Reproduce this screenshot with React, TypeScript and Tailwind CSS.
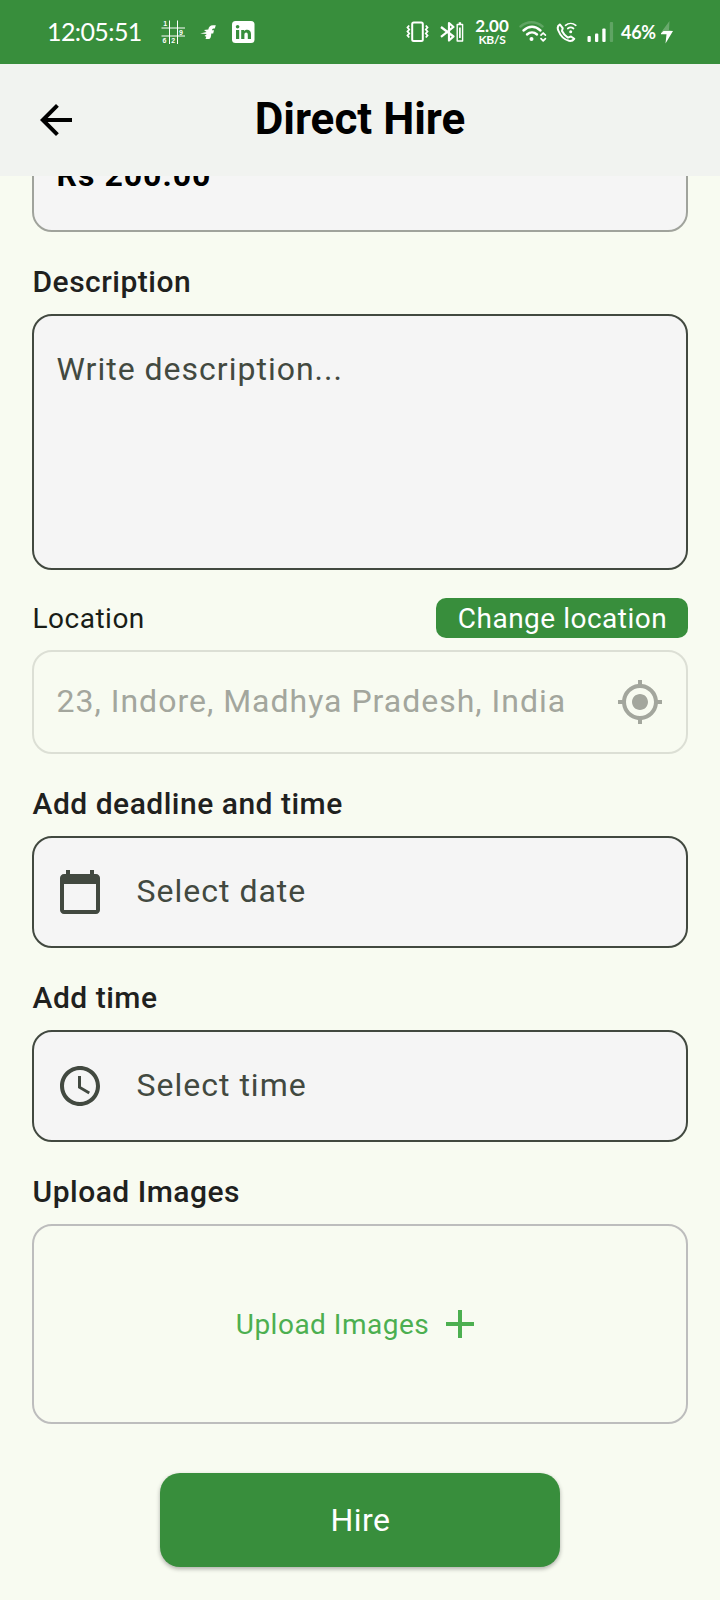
import type { ReactNode } from "react";
import { MdAccessTime, MdAdd, MdArrowBack, MdCalendarToday, MdMyLocation } from "react-icons/md";

function StatusBar() {
  return (
    <div className="flex h-16 shrink-0 items-center bg-[#388e3c] pl-[47px] text-white">
      <span className="w-[114px] whitespace-nowrap pb-[3px] font-['Lato',sans-serif] text-[25px] leading-8 tracking-[-0.6px]">12:05:51</span>
      <svg className="h-6 w-6 shrink-0" viewBox="0 0 24 24" fill="none" stroke="white" strokeWidth="1">
        <path d="M8.5 .5V24M16.5 .5V24M.5 8H24M.5 16H24" />
        <g fill="white" stroke="none" fontFamily="Liberation Sans" fontWeight="700" fontSize="7">
          <text x="2.2" y="6">1</text>
          <text x="18" y="14.5">9</text>
          <text x="1.5" y="23">6</text>
          <text x="10.2" y="23">2</text>
        </g>
      </svg>
      <svg className="ml-[15px] h-4 w-4 shrink-0" viewBox="0 0 16 16" fill="white">
        <path d="M15.8 1.3H13C10 1.3 8.800 3 8.300 5.500L4 6L6.500 8L.2 9.500L6.800 10L4.500 12L6.300 12.800L5.500 15H8.500C10.500 15 11 13 11.300 9.400H13.200L14 6.200H12C12.200 4.800 13 4.500 14.800 4.500Z" />
      </svg>
      <svg className="ml-4 h-[22px] w-[23px] shrink-0" viewBox="0 0 23 22">
        <rect width="22.5" height="22" rx="3.5" fill="white" />
        <g fill="#388e3c">
          <circle cx="5.600" cy="5.700" r="1.800" />
          <path d="M4 9h3.200v9H4zM9.200 9h3v1.300c1.800-2.500 6.800-1.800 6.800 2.600V18h-3.200v-4.300c0-3-3.400-2.800-3.400 0V18H9.200z" />
        </g>
      </svg>

      <svg className="ml-[151px] h-[22px] w-[23px] shrink-0" viewBox="0 0 23 22" fill="none" stroke="white">
        <rect x="6.200" y="1.500" width="10.600" height="18.500" rx="1.500" strokeWidth="2" />
        <path d="M3.200 4.500L1.500 6.500L3.200 8.500L1.500 10.500L3.200 12.500L1.500 14.500L3.200 16.500M19.800 4.500L21.500 6.500L19.800 8.500L21.500 10.500L19.800 12.500L21.500 14.500L19.800 16.500" strokeWidth="1.800" />
      </svg>
      <svg className="ml-[11px] h-[22px] w-[24px] shrink-0" viewBox="0 0 24 22" fill="none" stroke="white" strokeLinejoin="round">
        <path d="M1 6L13.500 15.500L9 19.500V2L13.500 6L1 15.800" strokeWidth="2.200" />
        <path d="M17.200 3.500h5.400v16.500h-5.400zM18.700 2h2.400" strokeWidth="1.400" />
        <path d="M19.900 6.500v10.500" strokeWidth="1.700" />
      </svg>
      <div className="ml-[12px] flex w-[32px] flex-col items-center font-['Lato',sans-serif] font-bold">
        <span className="text-[17px] leading-[13px]">2.00</span>
        <span className="mt-[2px] text-[12px] leading-[11px] tracking-[-0.3px]">KB/S</span>
      </div>
      <svg className="ml-[11px] h-[22px] w-7 shrink-0" viewBox="0 0 28 22" fill="none" stroke="white" strokeWidth="2.400" strokeLinecap="round">
        <path d="M1.500 5.500C8 -.2 17 -.2 23.500 5.500" opacity=".2" />
        <path d="M4.500 9.500C10 4.800 16 4.800 21.500 9.500M8 13.500C11 10.800 15 10.800 18 13.500" />
        <circle cx="12.500" cy="18" r="2" fill="white" stroke="none" />
        <path d="M22 14.200L24.200 12L26.400 14.200M22 17.600L24.200 19.800L26.400 17.600" strokeWidth="1.700" strokeLinejoin="round" />
      </svg>
      <svg className="ml-[9px] h-[22px] w-[22px] shrink-0" viewBox="0 0 22 22" fill="none" stroke="white" strokeLinejoin="round" strokeLinecap="round">
        <path d="M4 3.500C1.800 4.500 1.300 7 2.300 9.500C4.300 14.500 8.500 18.700 13 19.800C15.500 20.300 17 19.500 18.200 17.800L15 15.500L11.800 16.600C9.300 15 7.300 12.700 6 10L6.700 7.200Z" strokeWidth="2" />
        <path d="M9.500 4.300C12.500 1.900 16.800 1.900 19.800 4.300M11.800 7.500C13.500 6.200 15.800 6.200 17.500 7.500" strokeWidth="1.700" />
        <circle cx="14.700" cy="10.800" r="1.500" fill="white" stroke="none" />
      </svg>
      <svg className="ml-[9px] h-[22px] w-[27px] shrink-0" viewBox="0 0 27 22" fill="white">
        <rect x=".5" y="15" width="3.300" height="6" rx="1" />
        <rect x="8" y="12.500" width="3.300" height="8.500" rx="1" />
        <rect x="15.300" y="7.500" width="3.300" height="13.500" rx="1" />
        <rect x="22.800" y="1" width="3.300" height="20" rx="1" opacity=".2" />
      </svg>
      <span className="ml-[7px] w-[38px] whitespace-nowrap font-['Lato',sans-serif] text-[18px] font-bold leading-6 tracking-[-0.3px]">46%</span>
      <svg className="ml-px h-6 w-[14px] shrink-0" viewBox="0 0 14 24" fill="white">
        <path d="M9.500 1L1 12.500H7L6.500 11H13L9 10Z" opacity=".25" />
        <path d="M1 13.200L3.500 11H13L5.500 23.500L6.500 14.200H1Z" />
      </svg>
    </div>
  );
}

function Label({ children }: { children: ReactNode }) {
  return (
    <h2 className="mt-8 mb-[14px] h-9 shrink-0 pl-[0.5px] text-[30px] leading-9 font-medium tracking-[0.5px] text-[#1f211e]">
      {children}
    </h2>
  );
}

function PickerField({ icon, text }: { icon: ReactNode; text: string }) {
  return (
    <button className="flex h-28 w-full shrink-0 items-center rounded-[20px] border-2 border-[#424940] bg-[#f5f5f5] px-[22px] text-[#424940]">
      {icon}
      <span className="ml-[32.5px] pb-[2px] text-[32px] leading-10 tracking-[1px]">{text}</span>
    </button>
  );
}

export default function App() {
  return (
    <div className="flex h-[1600px] w-[720px] flex-col overflow-hidden bg-[#f8fbf1] font-['Roboto',sans-serif]">
      <StatusBar />
      <header className="grid h-28 shrink-0 grid-cols-[48px_1fr_48px] items-center bg-[#f1f3f0] px-8 text-black">
        <MdArrowBack className="size-12" />
        <h1 className="pb-[2px] text-center text-[44px] leading-[56px] font-bold">Direct Hire</h1>
      </header>

      <main className="flex min-h-0 flex-1 flex-col overflow-hidden px-8">
        <div className="flex h-14 shrink-0 flex-col justify-end overflow-hidden">
          <div className="flex h-28 shrink-0 items-center rounded-[20px] border-2 border-[#a0a39c] bg-[#f5f5f5] px-[22.5px] text-[32px] leading-10 font-bold tracking-[1px] text-black">
            <span className="pb-[2px]">Rs 200.00</span>
          </div>
        </div>

        <Label>Description</Label>
        <div className="h-64 shrink-0 rounded-[20px] border-2 border-[#424940] bg-[#f5f5f5] px-[22.5px] pt-[33px] text-[32px] leading-10 tracking-[1px] text-[#424940]">
          Write description...
        </div>

        <div className="mt-7 mb-3 flex h-10 shrink-0 items-center justify-between text-[28px] leading-10 tracking-[0.5px]">
          <span className="pt-[2px] pl-[0.5px] text-[#191d17]">Location</span>
          <button className="h-10 w-[252px] rounded-[10px] bg-[#388e3c] pt-px pl-px text-center text-white">Change location</button>
        </div>
        <div className="flex h-[104px] shrink-0 items-center justify-between rounded-[20px] border-2 border-[#dcdfd5] px-[22px] text-[#a3a69d]">
          <span className="pb-[2px] pl-[0.5px] text-[32px] leading-10 tracking-[1px]">23, Indore, Madhya Pradesh, India</span>
          <MdMyLocation className="size-12" />
        </div>

        <Label>Add deadline and time</Label>
        <PickerField icon={<MdCalendarToday className="size-12" />} text="Select date" />

        <Label>Add time</Label>
        <PickerField icon={<MdAccessTime className="size-12" />} text="Select time" />

        <Label>Upload Images</Label>
        <button className="flex h-[200px] shrink-0 items-center justify-center gap-[7px] rounded-[20px] border-2 border-[#bdbdbd] text-[#4caf50]">
          <span className="pt-[2px] text-[28px] leading-10 tracking-[0.5px]">Upload Images</span>
          <MdAdd className="size-12" />
        </button>

        <button className="mt-[49px] h-[94px] w-[400px] shrink-0 self-center rounded-[20px] bg-[#388e3c] pl-px text-[32px] leading-10 tracking-[0.5px] text-white shadow-[0_2px_4px_rgba(0,0,0,0.3)]">
          Hire
        </button>
      </main>
    </div>
  );
}
